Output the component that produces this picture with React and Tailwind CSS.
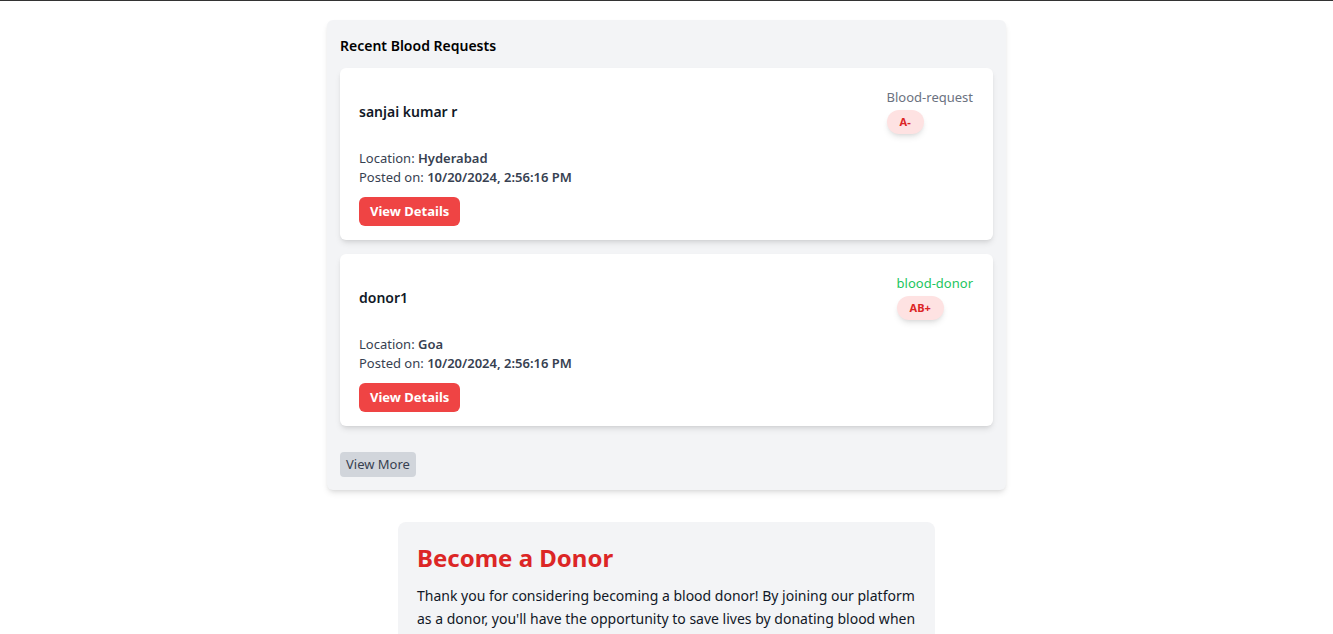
import React from 'react';

const requests = [
    {
        name: 'sanjai kumar r',
        type: 'Blood-request',
        group: 'A-',
        location: 'Hyderabad',
        posted: '10/20/2024, 2:56:16 PM',
    },
    {
        name: 'donor1',
        type: 'blood-donor',
        group: 'AB+',
        location: 'Goa',
        posted: '10/20/2024, 2:56:16 PM',
    },
];

function RequestCard({ item }) {
    const isDonor = item.type === 'blood-donor';
    return (
        <div className="bg-white rounded-md shadow-md px-[19px] pt-5 pb-[14px]">
            <div className="flex items-center justify-between">
                <h3 className="text-[14px] font-semibold text-[#111827]">{item.name}</h3>
                <div className="flex flex-col items-start mr-px">
                    <span className={`text-[13px] leading-[19px] ${isDonor ? 'text-[#22c55e]' : 'text-[#6b7280]'}`}>
                        {item.type}
                    </span>
                    <span className="mt-[3px] bg-[#fee2e2] text-[#dc2626] text-[11px] font-bold rounded-full px-[13px] h-[24px] flex items-center shadow-md">
                        {item.group}
                    </span>
                </div>
            </div>
            <div className="mt-[15px] text-[13px] leading-[19px] text-[#374151]">
                <p>Location: <span className="font-semibold">{item.location}</span></p>
                <p>Posted on: <span className="font-semibold">{item.posted}</span></p>
            </div>
            <button className="mt-[10px] bg-[#ef4444] text-white text-[13px] font-bold rounded-md h-[29px] px-[11px]">
                View Details
            </button>
        </div>
    );
}

export default function App() {
    return (
        <div className="min-h-screen bg-white border-t border-[#333] font-['Noto_Sans',sans-serif]">
            <div className="w-[679px] mx-auto mt-[19px] bg-[#f3f4f6] rounded-md shadow-md px-[13px] pt-[15px] pb-[13px]">
                <h2 className="text-[14px] font-semibold text-black leading-[22px]">Recent Blood Requests</h2>
                <div className="mt-[11px] flex flex-col gap-[14px]">
                    {requests.map((r) => (
                        <RequestCard key={r.name} item={r} />
                    ))}
                </div>
                <button className="mt-[26px] bg-[#d1d5db] text-[#374151] text-[13px] rounded-sm h-[25px] px-[6px]">
                    View More
                </button>
            </div>

            <div className="w-[537px] mx-auto mt-8 bg-[#f3f4f6] rounded-lg px-[19px] pt-[20px] pb-6">
                <h2 className="text-[24px] font-bold text-[#dc2626] leading-[32px]">Become a Donor</h2>
                <p className="mt-[10px] text-[14px] leading-[23px] text-[#111827]">
                    Thank you for considering becoming a blood donor! By joining our platform as a donor, you'll have the opportunity to save lives by donating blood when it is needed the most. Your contribution can make a real difference to patients in need.
                </p>
            </div>
        </div>
    );
}
